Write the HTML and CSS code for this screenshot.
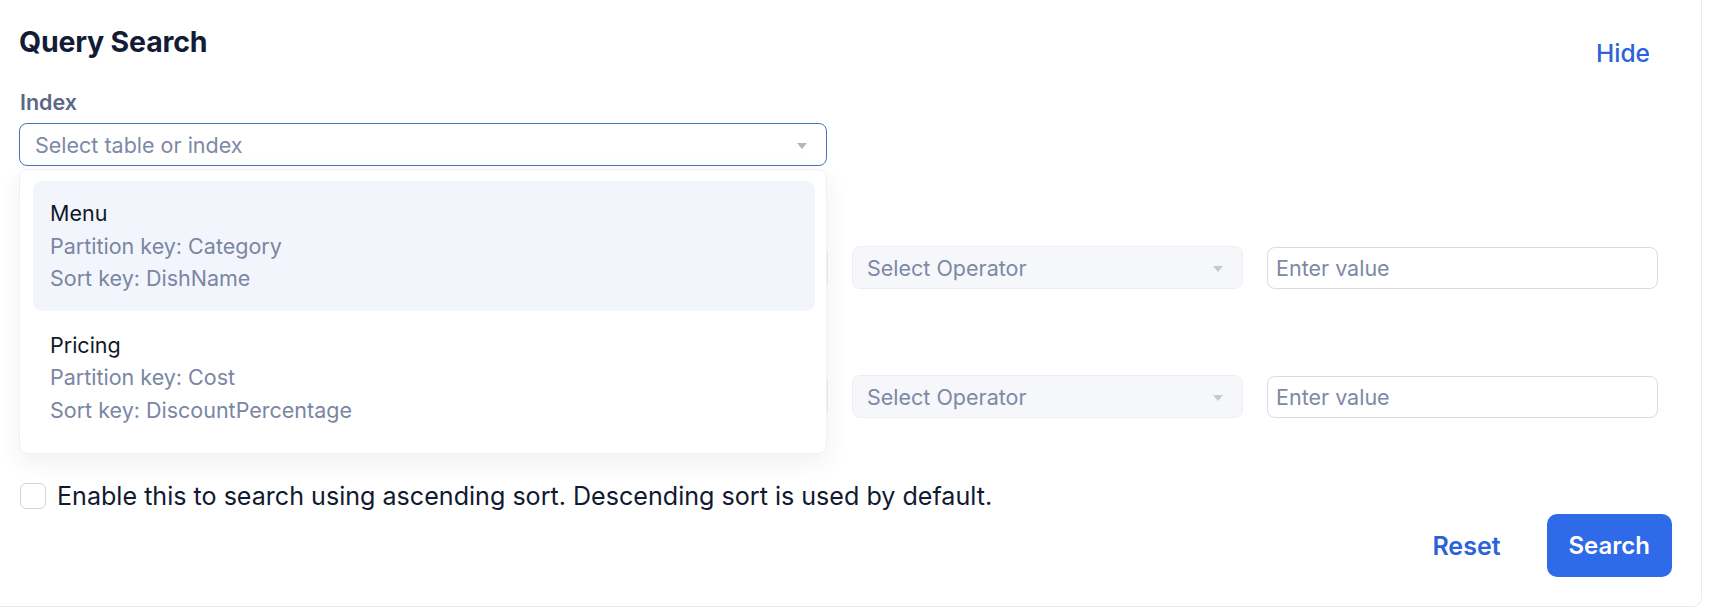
FILE: index.html
```html
<!DOCTYPE html>
<html lang="en">
<head>
  <meta charset="UTF-8">
  <title>Query Search</title>
  <link rel="stylesheet" href="styles.css">
</head>
<body>
  <div class="panel">
    <!-- header: title and hide toggle -->
    <div class="panel-header">
      <h2 class="panel-title">Query Search</h2>
      <button class="link-btn">Hide</button>
    </div>

    <label class="field-label">Index</label>
    <div class="index-field">
      <div class="select select-active">
        <span class="placeholder">Select table or index</span>
        <span class="caret"></span>
      </div>

      <!-- open dropdown list -->
      <div class="dropdown">
        <div class="dropdown-item active">
          <div class="item-name">Menu</div>
          <div class="item-meta">Partition key: Category</div>
          <div class="item-meta">Sort key: DishName</div>
        </div>
        <div class="dropdown-item">
          <div class="item-name">Pricing</div>
          <div class="item-meta">Partition key: Cost</div>
          <div class="item-meta">Sort key: DiscountPercentage</div>
        </div>
      </div>
    </div>

    <!-- key conditions (key column sits under the open dropdown) -->
    <div class="key-rows">
      <div class="key-row">
        <div class="key-col">
          <div class="key-label"></div>
          <div class="select select-disabled"></div>
        </div>
        <div class="select select-disabled">
          <span class="placeholder">Select Operator</span>
          <span class="caret"></span>
        </div>
        <div class="text-input"><span class="placeholder">Enter value</span></div>
      </div>
      <div class="key-row">
        <div class="key-col">
          <div class="key-label"></div>
          <div class="select select-disabled"></div>
        </div>
        <div class="select select-disabled">
          <span class="placeholder">Select Operator</span>
          <span class="caret"></span>
        </div>
        <div class="text-input"><span class="placeholder">Enter value</span></div>
      </div>
    </div>

    <label class="check-row">
      <span class="checkbox"></span>
      <span>Enable this to search using ascending sort. Descending sort is used by default.</span>
    </label>

    <div class="actions">
      <button class="link-btn">Reset</button>
      <button class="primary-btn">Search</button>
    </div>
  </div>
</body>
</html>
```

FILE: styles.css
```css
/* base */
body {
  margin: 0;
  font-family: Inter, "Noto Sans", sans-serif;
  background: #fff;
  color: #111a30;
  overflow: hidden;
}
button {
  font-family: inherit;
  border: none;
  background: none;
  cursor: pointer;
}

/* card */
.panel {
  box-sizing: border-box;
  width: 1703px;
  margin: -1px 0 0 -1px;
  padding: 0 29px 29px 20px;
  border: 1px solid #e9ebf1;
  border-radius: 0 0 9px 0;
  background: #fff;
}
.panel-header {
  display: flex;
  justify-content: space-between;
  align-items: flex-start;
  padding-top: 21px;
  margin-bottom: 4px;
}
.panel-title {
  margin: 3px 0 0 -1px;
  font-size: 28.5px;
  line-height: 36px;
  font-weight: 700;
  color: #131c36;
  letter-spacing: -0.2px;
}
.link-btn {
  height: 63px;
  padding: 0 22px;
  font-size: 24.5px;
  font-weight: 500;
  color: #2b63d9;
}

/* fields */
.field-label {
  display: block;
  font-size: 21.5px;
  line-height: 28px;
  font-weight: 600;
  color: #5b6785;
  margin-bottom: 7px;
}
.key-label {
  height: 28px;
  margin-bottom: 7px;
}
.index-field {
  position: relative;
  width: 808px;
  margin-left: -1px;
}
.select {
  box-sizing: border-box;
  height: 43px;
  display: flex;
  align-items: center;
  justify-content: space-between;
  padding: 0 19px 0 14px;
  border: 1px solid #eceef3;
  border-radius: 8px;
  background: #f6f7fa;
}
.select-active {
  padding-left: 15px;
  border-color: #4a70c4;
  background: #fff;
}
.placeholder {
  font-size: 21.5px;
  color: #7d89a6;
}
.caret {
  width: 0;
  height: 0;
  border-left: 5px solid transparent;
  border-right: 5px solid transparent;
  border-top: 6px solid #b0b6c4;
  margin-top: 3px;
}
.select-disabled .caret {
  border-top-color: #c4c9d3;
}

/* dropdown overlay */
.dropdown {
  position: absolute;
  top: 46px;
  left: 0;
  right: 0;
  z-index: 5;
  display: flex;
  flex-direction: column;
  gap: 2px;
  padding: 11px 11px 11px 13px;
  background: #fff;
  border: 1px solid #eef0f5;
  border-radius: 9px;
  box-shadow: 0 8px 24px rgba(30, 41, 70, 0.07);
}
.dropdown-item {
  padding: 16px 17px;
  border-radius: 9px;
}
.dropdown-item.active {
  background: #f3f5fd;
}
.item-name,
.item-meta {
  font-size: 21.5px;
  line-height: 32.5px;
}
.item-name {
  color: #111827;
}
.item-meta {
  color: #7a86a3;
}

/* key rows */
.key-rows {
  display: flex;
  flex-direction: column;
  gap: 51px;
  margin-top: 45px;
}
.key-row {
  display: grid;
  grid-template-columns: 808px 391px 391px;
  column-gap: 24px;
  align-items: end;
}
.text-input {
  box-sizing: border-box;
  height: 42px;
  display: flex;
  align-items: center;
  padding: 0 8px;
  border: 1px solid #d7dbe7;
  border-radius: 8px;
  background: #fff;
}

/* sort checkbox */
.check-row {
  display: flex;
  align-items: center;
  gap: 11px;
  margin-top: 65px;
  font-size: 25.1px;
  line-height: 26px;
  color: #111a30;
}
.checkbox {
  box-sizing: border-box;
  width: 26px;
  height: 26px;
  border: 1px solid #cfd4de;
  border-radius: 6px;
  background: #fff;
}

/* actions */
.actions {
  display: flex;
  justify-content: flex-end;
  gap: 24px;
  margin-top: 5px;
}
.actions .link-btn {
  font-size: 25px;
  font-weight: 600;
}
.primary-btn {
  height: 63px;
  padding: 0 22px;
  border-radius: 10px;
  background: #2f6ae8;
  color: #fff;
  font-size: 24px;
  font-weight: 600;
}
```
